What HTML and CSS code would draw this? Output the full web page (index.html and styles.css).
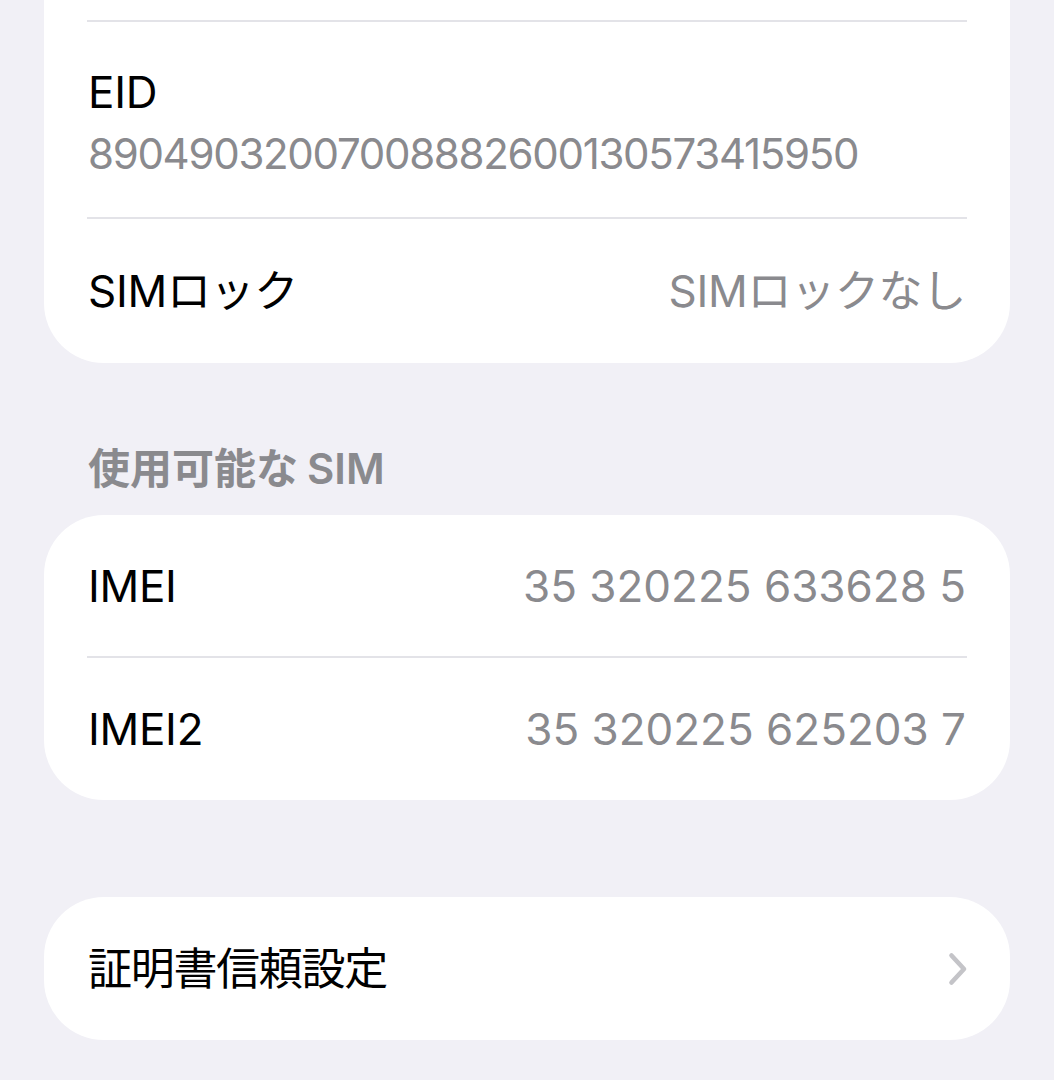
FILE: index.html
```html
<!DOCTYPE html>
<html lang="ja">
<head>
<meta charset="utf-8">
<title>情報</title>
<link rel="stylesheet" href="styles.css">
</head>
<body>
<div class="page">
  <section class="card card-cut">
    <div class="row-partial"></div>
    <div class="sep"></div>
    <div class="row row-stack">
      <div class="label">EID</div>
      <div class="sub">89049032007008882600130573415950</div>
    </div>
    <div class="sep"></div>
    <div class="row row-sim">
      <div class="label">SIMロック</div>
      <div class="value">SIMロックなし</div>
    </div>
  </section>

  <h2 class="section-header">使用可能な<span class="latin">SIM</span></h2>

  <section class="card">
    <div class="row row-a">
      <div class="label">IMEI</div>
      <div class="value num">35 320225 633628 5</div>
    </div>
    <div class="sep"></div>
    <div class="row row-b">
      <div class="label">IMEI2</div>
      <div class="value num">35 320225 625203 7</div>
    </div>
  </section>

  <section class="card card-last">
    <div class="row">
      <div class="label label-cjk">証明書信頼設定</div>
      <svg class="chevron" width="20" height="34" viewBox="0 0 20 34" aria-hidden="true">
        <path d="M3.5 3.5 L16 17 L3.5 30.5" fill="none" stroke="#c4c4c8" stroke-width="4.6" stroke-linecap="round" stroke-linejoin="round"/>
      </svg>
    </div>
  </section>
</div>
</body>
</html>
```

FILE: styles.css
```css
html, body {
  margin: 0;
  padding: 0;
  background: #f1f0f6;
}

body {
  font-family: Inter, "Noto Sans CJK JP", sans-serif;
  color: #000;
  width: 1054px;
  height: 1080px;
  overflow: hidden;
}

.page {
  padding: 0 44px;
}

.card {
  background: #fff;
  border-radius: 60px;
  display: flex;
  flex-direction: column;
}

.card-cut {
  border-top-left-radius: 0;
  border-top-right-radius: 0;
}

.card-last {
  margin-top: 97px;
}

.row-partial {
  height: 20px;
}

.sep {
  height: 2px;
  background: #e3e3e8;
  margin: 0 43px 0 43px;
}

.row {
  display: flex;
  align-items: center;
  justify-content: space-between;
  min-height: 143px;
  padding: 0 44px;
  box-sizing: border-box;
}

.row-sim {
  min-height: 144px;
}

.row-a {
  min-height: 141px;
}

.row-b {
  min-height: 142px;
}

.row-stack {
  flex-direction: column;
  align-items: flex-start;
  justify-content: flex-start;
  min-height: 195px;
  padding-top: 39px;
  padding-bottom: 32px;
}

.label {
  font-size: 44px;
  line-height: 62px;
  letter-spacing: -0.3px;
}

.label-cjk {
  letter-spacing: -1.3px;
}

.sub {
  font-size: 42px;
  line-height: 62px;
  color: #8a8a8e;
  letter-spacing: -1.3px;
}

.value {
  font-size: 44px;
  line-height: 62px;
  color: #8a8a8e;
  letter-spacing: -0.3px;
}

.value.num {
  letter-spacing: 0;
}

.section-header {
  margin: 0;
  padding: 80px 44px 20px;
  font-size: 42px;
  line-height: 52px;
  font-weight: 600;
  color: #8a8a8e;
  letter-spacing: 0;
}

.latin {
  margin-left: 9px;
}

.chevron {
  display: block;
  margin-right: -2px;
}
```
